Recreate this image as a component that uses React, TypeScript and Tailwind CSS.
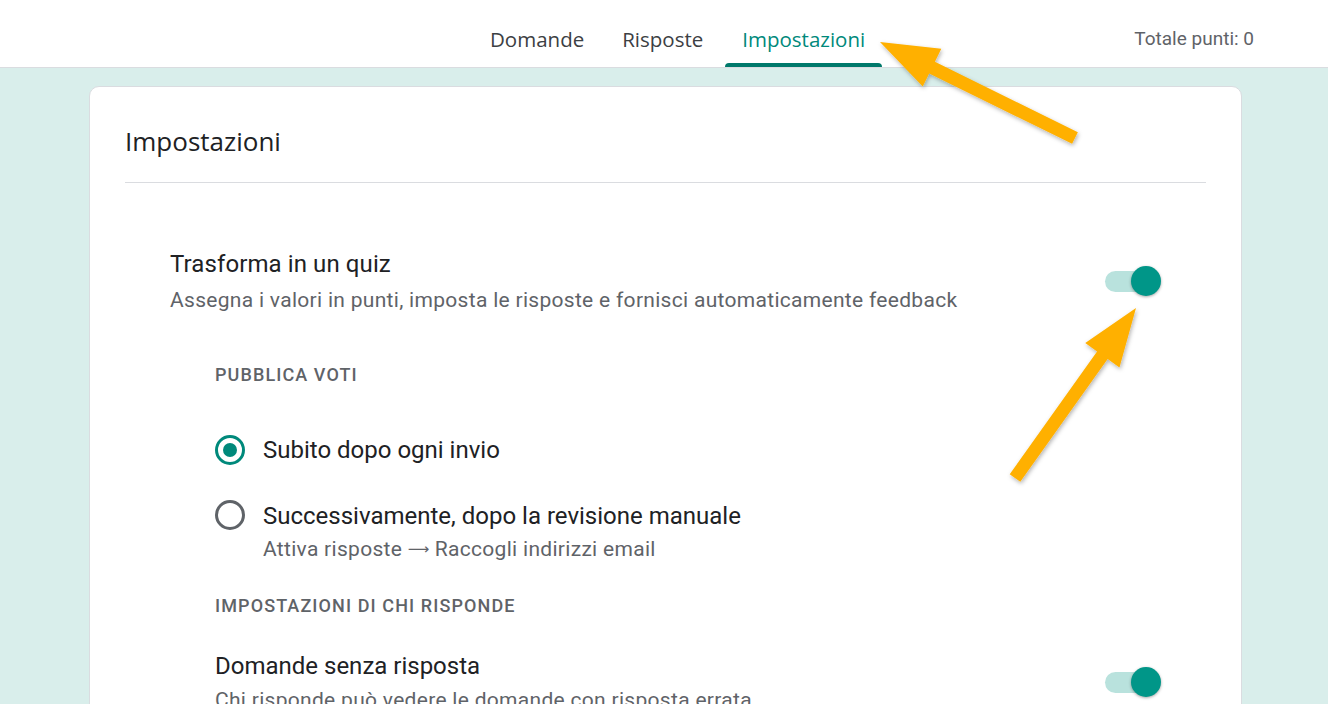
import React from 'react';

type Pt = [number, number];

// fat arrow polygon from tail to tip
function arrowPoints(tail: Pt, tip: Pt, head = 58, headW = 42, shaft = 13) {
  const dx = tip[0] - tail[0];
  const dy = tip[1] - tail[1];
  const len = Math.hypot(dx, dy);
  const ux = dx / len;
  const uy = dy / len;
  const nx = -uy;
  const ny = ux;
  const bx = tip[0] - ux * head;
  const by = tip[1] - uy * head;
  const pts: Pt[] = [
    tip,
    [bx + (nx * headW) / 2, by + (ny * headW) / 2],
    [bx + (nx * shaft) / 2, by + (ny * shaft) / 2],
    [tail[0] + (nx * shaft) / 2, tail[1] + (ny * shaft) / 2],
    [tail[0] - (nx * shaft) / 2, tail[1] - (ny * shaft) / 2],
    [bx - (nx * shaft) / 2, by - (ny * shaft) / 2],
    [bx - (nx * headW) / 2, by - (ny * headW) / 2],
  ];
  return pts.map((p) => p.join(',')).join(' ');
}

function Toggle() {
  return (
    <div className="relative h-[30px] w-[56px] shrink-0">
      <div className="absolute left-0 top-[5px] h-[21px] w-[54px] rounded-full bg-[#b9e2dd]" />
      <div className="absolute right-0 top-0 h-[30px] w-[30px] rounded-full bg-[#009688] shadow-[0_1px_3px_rgba(0,0,0,0.35)]" />
    </div>
  );
}

function Radio({ checked }: { checked?: boolean }) {
  return (
    <div
      className={
        checked
          ? 'flex h-[30px] w-[30px] shrink-0 items-center justify-center rounded-full border-[3px] border-[#00897b]'
          : 'flex h-[30px] w-[30px] shrink-0 items-center justify-center rounded-full border-[3px] border-[#5f6368]'
      }
    >
      {checked && <div className="h-[14px] w-[14px] rounded-full bg-[#00897b]" />}
    </div>
  );
}

export default function App() {
  return (
    <div className="relative h-[704px] w-[1328px] overflow-hidden bg-[#d9eeeb] font-['Roboto',sans-serif]">
      <header className="flex h-[68px] items-end border-b border-[#dadce0] bg-white">
        <nav className="ml-[474px] flex gap-[6px] font-['Open_Sans',sans-serif] text-[20.5px] font-medium">
          <div className="flex h-[67px] items-center px-[16px] pt-[12px] text-[#3c4043]">Domande</div>
          <div className="flex h-[67px] items-center px-[16px] pt-[12px] text-[#3c4043]">Risposte</div>
          <div className="relative flex h-[67px] items-center px-[17px] pt-[12px] text-[#00897b]">
            Impostazioni
            <div className="absolute inset-x-0 bottom-0 h-[4px] rounded-t-[4px] bg-[#00796b]" />
          </div>
        </nav>
        <div className="ml-auto mr-[74px] flex h-[67px] items-center pt-[12px] text-[19px] text-[#5f6368]">
          Totale punti: 0
        </div>
      </header>

      <main className="ml-[89px] mt-[18px] w-[1153px] rounded-t-[10px] border border-[#dadce0] bg-white px-[35px] pt-[38px] pb-[40px]">
        <h1 className="font-['Open_Sans',sans-serif] text-[26px] leading-[32px] text-[#202124]">Impostazioni</h1>
        <div className="mt-[25px] h-px bg-[#dadce0]" />

        <section className="mt-[65px] px-[45px]">
          <div className="flex items-center justify-between">
            <div>
              <div className="text-[24px] leading-[32px] tracking-[0.1px] text-[#202124]">Trasforma in un quiz</div>
              <div className="mt-[6px] text-[21px] leading-[28px] tracking-[0.3px] text-[#5f6368]">
                Assegna i valori in punti, imposta le risposte e fornisci automaticamente feedback
              </div>
            </div>
            <Toggle />
          </div>

          <div className="pl-[45px]">
            <div className="mt-[49px] text-[18px] font-medium uppercase leading-[24px] tracking-[1.1px] text-[#5f6368]">
              Pubblica voti
            </div>

            <div className="mt-[47px] flex items-center gap-[18px]">
              <Radio checked />
              <span className="text-[24px] leading-[32px] text-[#202124]">Subito dopo ogni invio</span>
            </div>

            <div className="mt-[34px] flex gap-[18px]">
              <Radio />
              <div>
                <div className="text-[24px] leading-[32px] text-[#202124]">Successivamente, dopo la revisione manuale</div>
                <div className="mt-[3px] h-[28px] text-[21px] leading-[28px] tracking-[0.3px] text-[#5f6368]">
                  Attiva risposte{' '}
                  <span className="inline-block align-top font-['DejaVu_Sans',sans-serif] text-[15px] leading-[28px] tracking-normal">⟶</span>{' '}
                  Raccogli indirizzi email
                </div>
              </div>
            </div>

            <div className="mt-[31px] text-[18px] font-medium uppercase leading-[24px] tracking-[1.1px] text-[#5f6368]">
              Impostazioni di chi risponde
            </div>

            <div className="mt-[32px] flex items-center justify-between">
              <div>
                <div className="text-[24px] leading-[32px] text-[#202124]">Domande senza risposta</div>
                <div className="mt-[4px] text-[21px] leading-[28px] tracking-[0.3px] text-[#5f6368]">
                  Chi risponde può vedere le domande con risposta errata
                </div>
              </div>
              <Toggle />
            </div>
          </div>
        </section>
      </main>

      <svg className="pointer-events-none absolute inset-0" width="1328" height="704">
        <defs>
          <filter id="sh" x="-20%" y="-20%" width="140%" height="140%">
            <feDropShadow dx="1" dy="2" stdDeviation="2" floodColor="#000" floodOpacity="0.3" />
          </filter>
        </defs>
        <polygon points={arrowPoints([1075, 138], [880, 42])} fill="#ffb000" filter="url(#sh)" />
        <polygon points={arrowPoints([1015, 478], [1136, 308])} fill="#ffb000" filter="url(#sh)" />
      </svg>
    </div>
  );
}
